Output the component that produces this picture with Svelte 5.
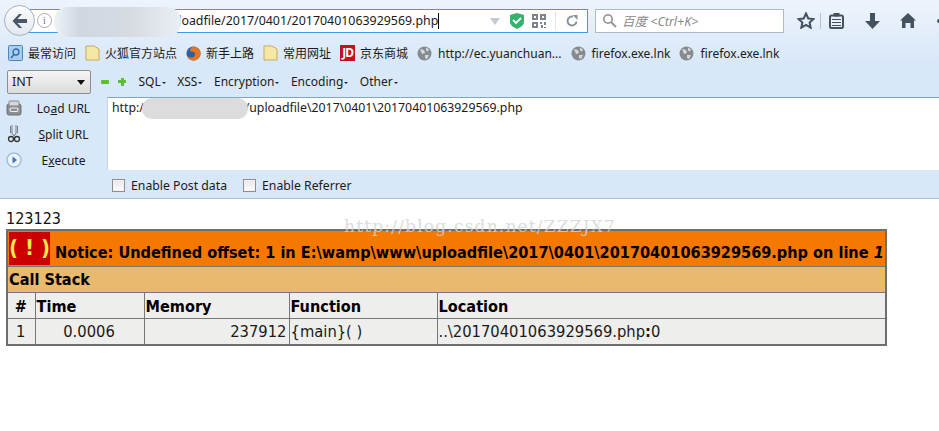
<script lang="ts">
  const bookmarks = [
    { icon: "search", label: "最常访问" },
    { icon: "folder", label: "火狐官方站点" },
    { icon: "fox", label: "新手上路" },
    { icon: "folder", label: "常用网址" },
    { icon: "jd", label: "京东商城" },
    { icon: "globe", label: "http://ec.yuanchuan..." },
    { icon: "globe", label: "firefox.exe.lnk" },
    { icon: "globe", label: "firefox.exe.lnk" },
  ];
  const menus = ["SQL", "XSS", "Encryption", "Encoding", "Other"];
</script>

<div class="browser">
  <div class="chrome">
    <div class="nav">
      <button class="back" aria-label="Back">
        <svg width="18" height="16" viewBox="0 0 18 16"><path d="M8 1 1.500 8 8 15h3L6.500 10H16V6H6.500L11 1z" fill="#4a5868"/></svg>
      </button>
      <div class="urlbar">
        <span class="info">i</span>
        <span class="url">http://www.ab.cn/uploadfile/2017/0401/20170401063929569.php</span><span class="caret"></span>
        <span class="spring"></span>
        <svg width="12" height="8" viewBox="0 0 12 8"><path d="M1 1h10L6 8z" fill="#c3cad2"/></svg>
        <svg width="14" height="16" viewBox="0 0 14 16"><path d="M7 0 14 2v7c0 3-3 5-7 7-4-2-7-4-7-7V2z" fill="#35b26b"/><path d="M3 7l3 3 5-5" fill="none" stroke="#fff" stroke-width="1.800"/></svg>
        <svg class="qr" width="14" height="14" viewBox="0 0 14 14" fill="#7d848c"><path d="M0 0h6v6H0zm2 2v2h2V2zM8 0h6v6H8zm2 2v2h2V2zM0 8h6v6H0zm2 2v2h2v-2zM8 8h2v2H8zm4 0h2v3h-2zm-3 3h2v3H9zm3 2h2v1h-2z" fill-rule="evenodd"/></svg>
        <span class="sep"></span>
        <svg class="reload" width="12" height="12" viewBox="0 0 12 12"><path d="M10.500 6.500A4.500 4.500 0 1 1 7 1.600" fill="none" stroke="#8b949d" stroke-width="2"/><path d="M6.500 0 11.500 0 11.500 5z" fill="#8b949d"/></svg>
      </div>
      <div class="search">
        <svg width="15" height="15" viewBox="0 0 15 15"><circle cx="6" cy="6" r="4.200" fill="none" stroke="#9a9a9a" stroke-width="1.800"/><path d="M9 9l5 5" stroke="#9a9a9a" stroke-width="2.200"/></svg>
        <span class="hint">百度 &lt;Ctrl+K&gt;</span>
      </div>
      <div class="tools">
        <svg width="18" height="17" viewBox="0 0 18 17"><path d="M9 1.500l2.300 5 5.200.5-3.900 3.500 1.100 5.200L9 13l-4.700 2.700 1.100-5.200L1.500 7l5.200-.5z" fill="none" stroke="#44525f" stroke-width="2"/></svg>
        <span class="tool-sep"></span>
        <svg width="15" height="16" viewBox="0 0 15 16"><rect x="1" y="2.500" width="13" height="12.500" rx="1.500" fill="none" stroke="#44525f" stroke-width="2"/><path d="M5 0h5v3H5zM3 6.500h9M3 9.500h9M3 12.500h9" fill="#44525f" stroke="#44525f"/></svg>
        <svg class="t-down" width="15" height="16" viewBox="0 0 15 16"><path d="M5 0h5v8h5l-7.500 8L0 8h5z" fill="#44525f"/></svg>
        <svg class="t-home" width="16" height="16" viewBox="0 0 16 16"><path d="M8 0l8 7.500h-2V15h-3.500v-5h-5v5H2V7.500H0z" fill="#44525f"/></svg>
        <span class="t-more"></span>
      </div>
    </div>

    <div class="bookmarks">
      {#each bookmarks as b}
        <span class="bm" class:globe={b.icon === "globe"}>
          {#if b.icon === "search"}
            <svg width="15" height="16" viewBox="0 0 15 16"><rect x=".5" y=".5" width="14" height="15" rx="1" fill="#a9cdec" stroke="#4a86bd"/><circle cx="8" cy="7" r="3" fill="none" stroke="#2c6aa5" stroke-width="1.300"/><path d="M6 9.500 3 13" stroke="#2c6aa5" stroke-width="1.500"/></svg>
          {:else if b.icon === "folder"}
            <svg width="15" height="16" viewBox="0 0 15 16"><path d="M1 1h8l5 3v11H1z" fill="#f6e7a4" stroke="#c4ab62"/></svg>
          {:else if b.icon === "fox"}
            <svg width="15" height="15" viewBox="0 0 16 16"><circle cx="8" cy="8" r="7.500" fill="#2f5f9f"/><path d="M8 .5a7.500 7.500 0 1 1-7.400 8.700C2 12 5 13 7.500 12 10 11 10.500 8 8.500 6.500 7 5.500 5 6 4 5c.5-2 2-4.500 4-4.500z" fill="#e8751f"/></svg>
          {:else if b.icon === "jd"}
            <span class="jd">JD</span>
          {:else}
            <svg width="15" height="15" viewBox="0 0 15 15"><circle cx="7.500" cy="7.500" r="7" fill="#868b90"/><path d="M3 3l4 1 1 3-3 1zM9 1.500l3 2-1 2-2-1zM8 9l4 0-2 4-2-1z" fill="#d6d9dc"/></svg>
          {/if}
          <span>{b.label}</span>
        </span>
      {/each}
    </div>

    <div class="hackbar-top">
      <div class="select">INT<span class="arrow"></span></div>
      <span class="minus"></span>
      <span class="plus"></span>
      {#each menus as m}
        <span class="menu">{m}<i></i></span>
      {/each}
    </div>

    <div class="hackbar-main">
      <div class="actions">
        <div class="action">
          <svg width="16" height="16" viewBox="0 0 16 16"><rect x="1" y="4" width="14" height="11" rx="2" fill="#8a8f94" stroke="#6b7075"/><rect x="3" y="1" width="10" height="5" rx="1" fill="#d5d8da" stroke="#85898d"/><rect x="4" y="8" width="8" height="3.500" rx="1.500" fill="none" stroke="#f1f1f1" stroke-width="1.200"/></svg>
          <span class="a-label"><span>Lo<u>a</u>d URL</span></span>
        </div>
        <div class="action">
          <svg width="16" height="18" viewBox="0 0 16 18"><path d="M6 0v9l3 2M10 0v9l-3 2M4.500 1v7M11.500 1v7" fill="none" stroke="#76808a"/><circle cx="5" cy="14" r="2.500" fill="none" stroke="#333" stroke-width="1.300"/><circle cx="11" cy="14" r="2.500" fill="none" stroke="#333" stroke-width="1.300"/></svg>
          <span class="a-label"><span><u>S</u>plit URL</span></span>
        </div>
        <div class="action">
          <svg width="16" height="16" viewBox="0 0 16 16"><circle cx="8" cy="8" r="7" fill="#eef4fb" stroke="#9fc0e2" stroke-width="1.500"/><path d="M6.500 4.500 11 8l-4.500 3.500z" fill="#3f74ad"/></svg>
          <span class="a-label"><span>E<u>x</u>ecute</span></span>
        </div>
      </div>
      <div class="textarea">http://www.example.cc/uploadfile\2017\0401\20170401063929569.php</div>
    </div>

    <div class="options">
      <label class="opt"><span class="check"></span>Enable Post data</label>
      <label class="opt"><span class="check"></span>Enable Referrer</label>
    </div>

    <div class="blur blur-url"></div>
    <div class="blur blur-text"></div>
  </div>

  <div class="page">
    <div class="out">123123</div>
    <table>
      <colgroup><col class="c-n" /><col class="c-t" /><col class="c-m" /><col class="c-f" /><col /></colgroup>
      <tbody>
        <tr class="notice">
          <th colspan="5"><span class="bang">( ! )</span> Notice: Undefined offset: 1 in E:\wamp\www\uploadfile\2017\0401\20170401063929569.php on line <i>1</i></th>
        </tr>
        <tr class="stack"><th colspan="5">Call Stack</th></tr>
        <tr class="head">
          <th class="center">#</th><th>Time</th><th>Memory</th><th>Function</th><th>Location</th>
        </tr>
        <tr class="row">
          <td class="center">1</td><td class="center">0.0006</td><td class="right">237912</td><td>{"{main}"}( )</td><td>..\20170401063929569.php<b>:</b>0</td>
        </tr>
      </tbody>
    </table>
    <div class="watermark">http://blog.csdn.net/ZZZJX7</div>
  </div>
</div>

<style>
  :global(body) { background: #fff; }
  .browser { width: 939px; height: 431px; overflow: hidden; position: relative; font-family: "Noto Sans", "Noto Sans CJK SC", sans-serif; color: #1a1a1a; }

  .chrome { position: relative; height: 198px; border-bottom: 1px solid #a9bfd6; background: linear-gradient(#eef4fc 0, #d9e8f8 60px, #d9e8f8 100%); }

  .nav { height: 40px; display: flex; align-items: center; padding: 0 0 0 4px; }
  .nav > * { flex: none; }
  .back { width: 31px; height: 31px; margin-top: 1px; border-radius: 50%; border: 1px solid #a3b1c1; background: linear-gradient(#fbfcfe, #e3e9f0); padding: 0; display: flex; align-items: center; justify-content: center; z-index: 1; }
  .urlbar { width: 561px; height: 24px; margin-left: -8px; margin-top: 1px; box-sizing: border-box; border: 1px solid #3d9ae8; border-left: none; background: #fff; display: flex; align-items: center; padding-left: 10px; gap: 9px; }
  .info { width: 13px; height: 13px; border: 1px solid #aaa; border-radius: 50%; font: 10px/13px "Liberation Serif", serif; text-align: center; color: #777; flex: none; }
  .url { font-size: 12.400px; white-space: nowrap; margin-left: -3px; }
  .caret { width: 1px; height: 16px; background: #000; margin-left: -9px; flex: none; }
  .spring { flex: 1; }
  .qr { margin-left: -1px; }
  .sep { width: 1px; height: 18px; background: #dfe2e6; }
  .reload { margin: 0 9px 0 1px; }
  .search { width: 189px; height: 24px; margin-left: 7px; margin-top: 1px; box-sizing: border-box; border: 1px solid #a9bbd0; background: #fff; display: flex; align-items: center; padding-left: 6px; gap: 5px; }
  .hint { font-size: 12.500px; font-style: italic; color: #8a8a8a; }
  .tools { display: flex; align-items: center; margin-left: 13px; margin-top: 1px; }
  .tools > * { flex: none; }
  .tool-sep { width: 1px; height: 16px; background: #b4c3d3; margin: 0 8px 0 5px; }
  .t-down { margin-left: 21px; }
  .t-home { margin-left: 20px; }
  .t-more { width: 4px; height: 4px; border-radius: 50%; background: #44525f; margin-left: 21px; }

  .bookmarks { height: 24px; margin-top: 1px; display: flex; align-items: center; padding-left: 8px; gap: 9px; font-size: 12px; white-space: nowrap; }
  .bm { display: flex; align-items: center; gap: 5px; }
  .bm.globe { gap: 6px; }
  .jd { width: 15px; height: 16px; background: #c1121f; color: #fff; font-size: 12px; font-weight: 700; line-height: 16px; text-align: center; letter-spacing: -1px; }

  .hackbar-top { height: 27px; margin-top: 3px; display: flex; align-items: center; padding-left: 7px; font-size: 12px; }
  .select { position: relative; width: 84px; height: 24px; box-sizing: border-box; border: 1px solid #8f8f8f; border-radius: 2px; background: linear-gradient(#f4f4f4, #dcdcdc); font-size: 12.500px; line-height: 22px; padding-left: 4px; flex: none; }
  .arrow { position: absolute; right: 5px; top: 9px; border: 4px solid transparent; border-top: 5px solid #111; border-bottom: none; }
  .minus { width: 8px; height: 4px; background: #5cc02c; border-radius: 1px; margin-left: 10px; }
  .plus { width: 8px; height: 8px; margin-left: 9px; margin-right: 1px; background: linear-gradient(#5cc02c, #5cc02c) center / 8px 3px no-repeat, linear-gradient(#5cc02c, #5cc02c) center / 3px 8px no-repeat; }
  .menu { margin-left: 11.500px; white-space: nowrap; }
  .menu i { display: inline-block; border: 2px solid transparent; border-top: 2px solid #222; border-bottom: none; margin-left: 1px; vertical-align: 2px; }

  .hackbar-main { display: flex; margin-top: 2px; height: 73px; }
  .actions { width: 107px; flex: none; margin-top: -2px; }
  .action { height: 26px; display: flex; align-items: center; padding-left: 6px; font-size: 12px; }
  .action svg { flex: none; }
  .a-label { flex: 1; text-align: center; padding-right: 2px; }
  .textarea { flex: 1; background: #fff; border-top: 1px solid #7fa6cc; border-left: 1px solid #c6d7e8; font-size: 12.300px; padding: 1px 4px; white-space: nowrap; }

  .options { display: flex; gap: 16px; padding: 7px 0 0 112px; font-size: 12.250px; }
  .opt { display: flex; align-items: center; gap: 6px; }
  .check { width: 11px; height: 11px; border: 1px solid #8e8e8e; background: linear-gradient(#e6e6e6, #fff); box-shadow: inset 0 0 0 1px #f3f3f3; }

  .blur { position: absolute; }
  .blur-url { left: 54px; top: 7px; width: 127px; height: 30px; background: linear-gradient(90deg, #eef3f9, #cfd7e0 20%, #d6dbe2 60%, #eaeff6); border-radius: 14px; }
  .blur-text { left: 142px; top: 98px; width: 106px; height: 21px; background: #dcdcdc; border-radius: 10px; }

  .page { position: relative; padding: 10px 6px 0; }
  .out { font: 16px/20px "DejaVu Sans", sans-serif; font-stretch: condensed; color: #111; }
  table { border-collapse: collapse; width: 881px; font: 16.150px "DejaVu Sans", sans-serif; font-stretch: condensed; border: 2px solid #6e6e6e; table-layout: fixed; }
  .c-n { width: 28px; }
  .c-t { width: 109px; }
  .c-m { width: 145px; }
  .c-f { width: 148px; }
  th, td { border: 1px solid #777; padding: 0 2px 0 1px; text-align: left; }
  th { font-weight: 700; color: #000; }
  .notice th { background: #f57900; height: 35px; padding: 0 0 0 1px; white-space: nowrap; }
  .notice i { font-style: italic; }
  .bang { display: inline-block; width: 41px; height: 33px; background: #cc0000; color: #fce94f; font-size: 22px; line-height: 32px; text-align: center; vertical-align: 3px; white-space: nowrap; }
  .stack th { background: #e9b96e; height: 25px; }
  .head th { background: #eeeeec; height: 24px; padding-top: 1px; }
  .row td { background: #eeeeec; height: 25px; font-size: 16.400px; }
  .center, .head .center { text-align: center; }
  .right { text-align: right; }
  .watermark { position: absolute; left: 344px; top: 17px; font: 17px "DejaVu Serif", serif; color: #d4d4d4; letter-spacing: 1.200px; white-space: nowrap; opacity: .8; }
</style>
